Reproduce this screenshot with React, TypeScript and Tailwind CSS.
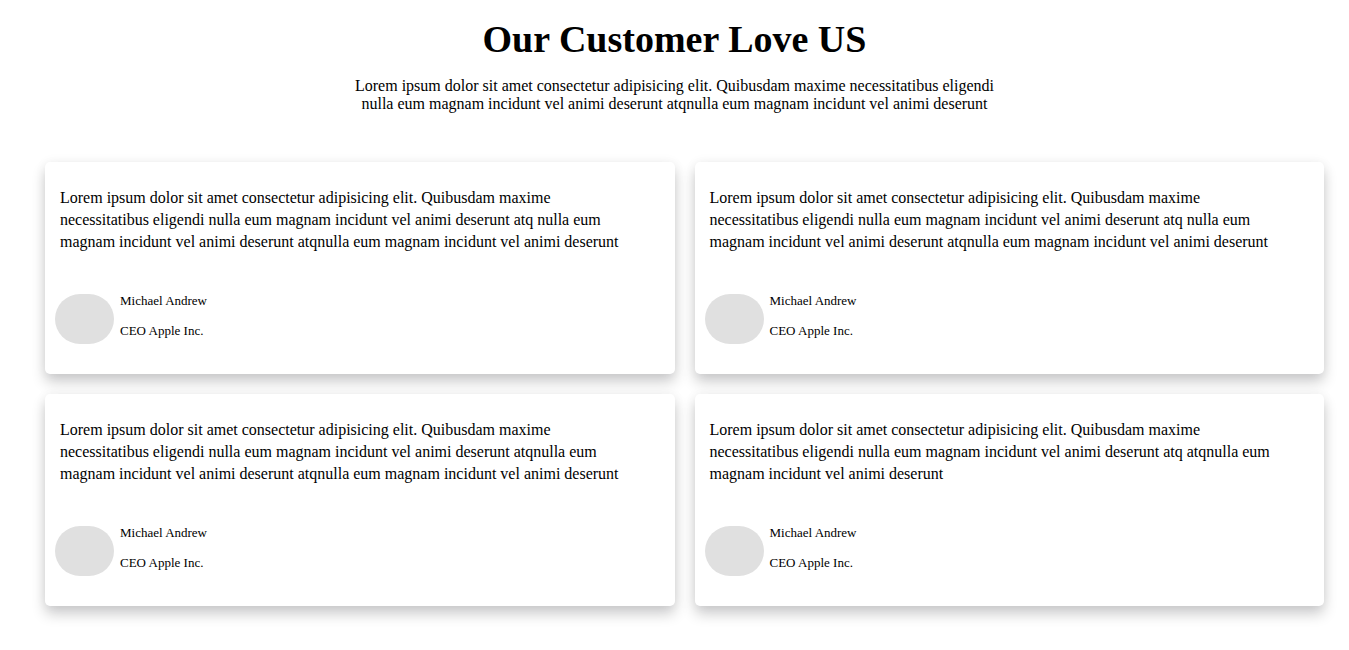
const BASE =
  'Lorem ipsum dolor sit amet consectetur adipisicing elit. Quibusdam maxime necessitatibus eligendi nulla eum magnam incidunt vel animi deserunt';

const REVIEWS = [
  { id: 1, text: `${BASE} atq nulla eum magnam incidunt vel animi deserunt atqnulla eum magnam incidunt vel animi deserunt` },
  { id: 2, text: `${BASE} atq nulla eum magnam incidunt vel animi deserunt atqnulla eum magnam incidunt vel animi deserunt` },
  { id: 3, text: `${BASE} atqnulla eum magnam incidunt vel animi deserunt atqnulla eum magnam incidunt vel animi deserunt` },
  { id: 4, text: `${BASE} atq atqnulla eum magnam incidunt vel animi deserunt` },
];

export default function App() {
  return (
    <div className="min-h-screen bg-white text-black font-['Liberation_Serif','Times_New_Roman',serif]">
      {/* Header */}
      <section className="pt-4 text-center">
        <h1 className="text-[38px] leading-[46px] font-bold">Our Customer Love US</h1>
        <p className="mx-auto mt-[15px] w-[650px] text-base leading-[18px]">
          Lorem ipsum dolor sit amet consectetur adipisicing elit. Quibusdam maxime necessitatibus eligendi nulla eum
          magnam incidunt vel animi deserunt atqnulla eum magnam incidunt vel animi deserunt
        </p>
      </section>

      {/* Reviews */}
      <section className="mt-[49px] grid grid-cols-2 gap-5 pl-[45px] pr-[25px]">
        {REVIEWS.map(review => (
          <div
            key={review.id}
            className="rounded-[5px] bg-white pt-[25px] pb-[30px] shadow-[0_8px_14px_rgba(0,0,10,0.2),0_0_12px_rgba(0,0,10,0.05)]"
          >
            <p className="ml-[15px] w-[570px] text-base leading-[22px] h-[66px]">{review.text}</p>
            <div className="mt-[41px] flex items-start gap-[6px] pl-[10px]">
              <div className="h-[50px] w-[59px] rounded-full bg-[#e0e0e0]" />
              <div className="-mt-px flex flex-col gap-[15px] text-[13px] leading-[15px]">
                <span>Michael Andrew</span>
                <span>CEO Apple Inc.</span>
              </div>
            </div>
          </div>
        ))}
      </section>
    </div>
  );
}
